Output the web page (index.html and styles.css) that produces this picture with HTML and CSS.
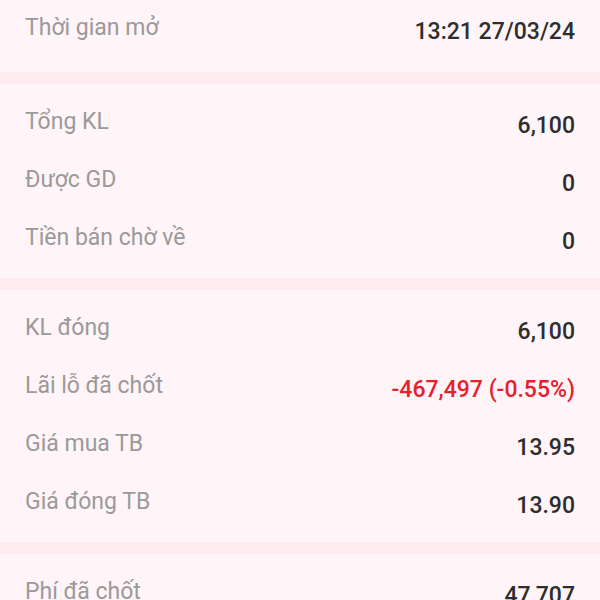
FILE: index.html
```html
<!DOCTYPE html>
<html lang="vi">
<head>
  <meta charset="UTF-8">
  <meta name="viewport" content="width=device-width, initial-scale=1.0">
  <title>Chi tiết vị thế</title>
  <link rel="stylesheet" href="styles.css">
</head>
<body>
  <div class="top-edge"></div>

  <section class="card card-first">
    <div class="row">
      <span class="label">Thời gian mở</span>
      <span class="value">13:21 27/03/24</span>
    </div>
  </section>

  <section class="card">
    <div class="row">
      <span class="label">Tổng KL</span>
      <span class="value">6,100</span>
    </div>
    <div class="row">
      <span class="label">Được GD</span>
      <span class="value">0</span>
    </div>
    <div class="row">
      <span class="label">Tiền bán chờ về</span>
      <span class="value">0</span>
    </div>
  </section>

  <section class="card">
    <div class="row">
      <span class="label">KL đóng</span>
      <span class="value">6,100</span>
    </div>
    <div class="row">
      <span class="label">Lãi lỗ đã chốt</span>
      <span class="value loss">-467,497 (-0.55%)</span>
    </div>
    <div class="row">
      <span class="label">Giá mua TB</span>
      <span class="value">13.95</span>
    </div>
    <div class="row">
      <span class="label">Giá đóng TB</span>
      <span class="value">13.90</span>
    </div>
  </section>

  <section class="card">
    <div class="row">
      <span class="label">Phí đã chốt</span>
      <span class="value">47,707</span>
    </div>
  </section>
</body>
</html>
```

FILE: styles.css
```css
body {
  font-family: Roboto, "Noto Sans", Arial, sans-serif;
  margin: 0;
  background-color: #fdebf0;
  overflow: hidden;
}

.top-edge {
  height: 3px;
  background-color: #fdf8fa;
}

.card {
  background-color: #fff4f7;
  padding: 10px 25px;
  margin-bottom: 12px;
}

.card-first {
  margin-top: -13px;
  padding-bottom: 14px;
}

.row {
  height: 58px;
  display: flex;
  justify-content: space-between;
  align-items: flex-start;
  font-size: 23px;
  line-height: 26px;
}

.label {
  margin-top: 15px;
  color: #9a9a9a;
}

.value {
  margin-top: 19px;
  color: #2d2d2d;
  font-weight: 500;
}

.value.loss {
  color: #e5222c;
}
```
